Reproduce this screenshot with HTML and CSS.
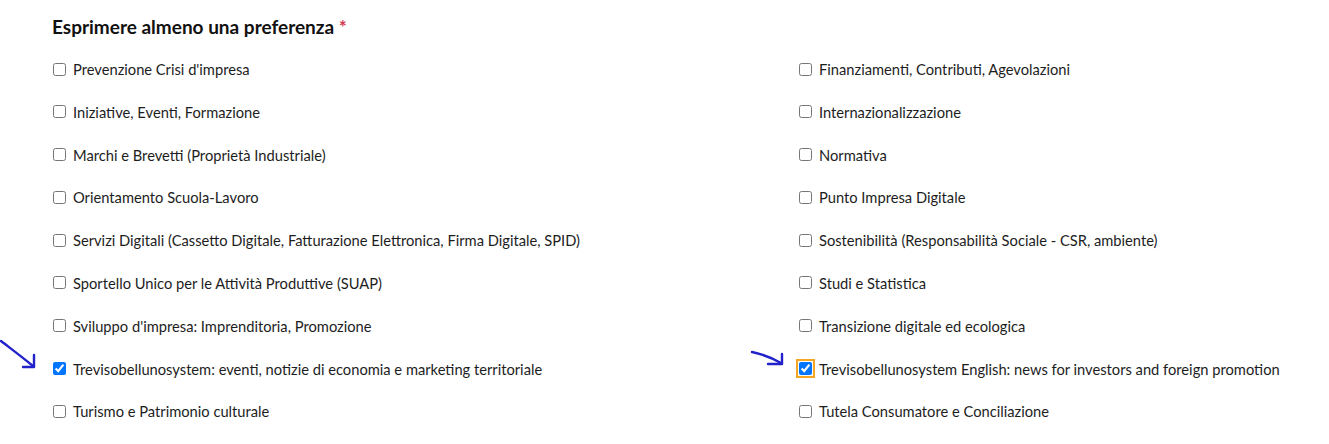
FILE: index.html
```html
<!DOCTYPE html>
<html lang="it">
<head>
<meta charset="utf-8">
<link rel="stylesheet" href="styles.css">
</head>
<body>
<div class="page">
  <h2 class="title">Esprimere almeno una preferenza <span class="req">*</span></h2>
  <div class="grid">
    <label class="opt"><input type="checkbox"><span>Prevenzione Crisi d'impresa</span></label>
    <label class="opt"><input type="checkbox"><span>Finanziamenti, Contributi, Agevolazioni</span></label>
    <label class="opt"><input type="checkbox"><span>Iniziative, Eventi, Formazione</span></label>
    <label class="opt"><input type="checkbox"><span>Internazionalizzazione</span></label>
    <label class="opt"><input type="checkbox"><span>Marchi e Brevetti (Proprietà Industriale)</span></label>
    <label class="opt"><input type="checkbox"><span>Normativa</span></label>
    <label class="opt"><input type="checkbox"><span>Orientamento Scuola-Lavoro</span></label>
    <label class="opt"><input type="checkbox"><span>Punto Impresa Digitale</span></label>
    <label class="opt"><input type="checkbox"><span>Servizi Digitali (Cassetto Digitale, Fatturazione Elettronica, Firma Digitale, SPID)</span></label>
    <label class="opt"><input type="checkbox"><span>Sostenibilità (Responsabilità Sociale - CSR, ambiente)</span></label>
    <label class="opt"><input type="checkbox"><span>Sportello Unico per le Attività Produttive (SUAP)</span></label>
    <label class="opt"><input type="checkbox"><span>Studi e Statistica</span></label>
    <label class="opt"><input type="checkbox"><span>Sviluppo d'impresa: Imprenditoria, Promozione</span></label>
    <label class="opt"><input type="checkbox"><span>Transizione digitale ed ecologica</span></label>
    <label class="opt"><input type="checkbox" checked><span>Trevisobellunosystem: eventi, notizie di economia e marketing territoriale</span></label>
    <label class="opt"><input type="checkbox" class="focused" checked><span>Trevisobellunosystem English: news for investors and foreign promotion</span></label>
    <label class="opt"><input type="checkbox"><span>Turismo e Patrimonio culturale</span></label>
    <label class="opt"><input type="checkbox"><span>Tutela Consumatore e Conciliazione</span></label>
  </div>
</div>
<svg class="arrow arrow-left" width="40" height="32" viewBox="0 0 40 32">
  <path d="M1 3 C 10 10, 22 19, 33 28" fill="none" stroke="#2222cc" stroke-width="2.4" stroke-linecap="round"/>
  <path d="M34 17 L 34 29 L 23 29" fill="none" stroke="#2222cc" stroke-width="2.4" stroke-linecap="round" stroke-linejoin="round"/>
</svg>
<svg class="arrow arrow-right" width="36" height="18" viewBox="0 0 36 18">
  <path d="M2 3 C 12 5, 22 9, 31 14" fill="none" stroke="#2222cc" stroke-width="2.4" stroke-linecap="round"/>
  <path d="M32 5 L 32 15 L 18 15" fill="none" stroke="#2222cc" stroke-width="2.4" stroke-linecap="round" stroke-linejoin="round"/>
</svg>
</body>
</html>
```
FILE: styles.css
```css
html, body {
  margin: 0;
  padding: 0;
  background: #fff;
}
body {
  width: 1329px;
  height: 444px;
  overflow: hidden;
  position: relative;
  font-family: Lato, "Liberation Sans", sans-serif;
  color: #1d1d1d;
}
.page {
  padding: 13px 0 0 52px;
}
.title {
  margin: 0 0 18px 0;
  font-size: 19px;
  font-weight: 700;
  line-height: 27px;
  color: #111;
}
.req {
  color: #d9364f;
}
.grid {
  display: grid;
  grid-template-columns: 746px 1fr;
  grid-auto-rows: 42.8px;
}
.opt {
  display: flex;
  align-items: center;
  height: 22px;
  font-size: 14.7px;
}
.opt input {
  margin: 0 7px 0 1px;
  width: 13px;
  height: 13px;
  flex: none;
  accent-color: #0075ff;
}
.opt input.focused {
  outline: 2px solid #f5a623;
  outline-offset: 1px;
}
.arrow {
  position: absolute;
}
.arrow-left {
  left: 0;
  top: 338px;
}
.arrow-right {
  left: 750px;
  top: 349px;
}
```
